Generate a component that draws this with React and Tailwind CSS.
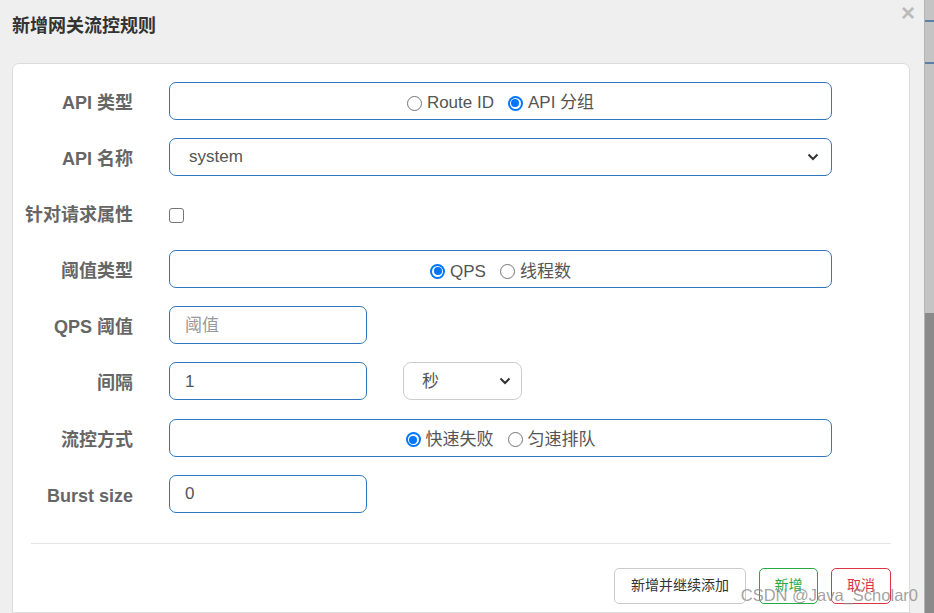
const FONT = { fontFamily: '"Liberation Sans", "Noto Sans CJK SC", sans-serif' };

const Radio = ({ checked, label }) => (
  <label className="flex items-center gap-[5px]">
    {checked ? (
      <span className="w-[15px] h-[15px] rounded-full bg-[#0075ff] flex items-center justify-center">
        <span className="w-[11px] h-[11px] rounded-full bg-white flex items-center justify-center">
          <span className="w-[8px] h-[8px] rounded-full bg-[#0075ff]" />
        </span>
      </span>
    ) : (
      <span className="w-[15px] h-[15px] rounded-full border border-[#767676] bg-white" />
    )}
    <span>{label}</span>
  </label>
);

const Chevron = () => (
  <svg width="12" height="8" viewBox="0 0 12 8" className="shrink-0">
    <path d="M1.5 1.5 L6 6 L10.5 1.5" fill="none" stroke="#333" strokeWidth="2" />
  </svg>
);

const Row = ({ label, children }) => (
  <div className="flex items-center h-[38px]">
    <div className="w-[120px] pt-[5px] text-right text-[18px] font-bold text-[#666] whitespace-nowrap">{label}</div>
    <div className="ml-[36px] flex items-center">{children}</div>
  </div>
);

const boxCls = 'h-[38px] border border-[#2f78c0] rounded-[7px] bg-white text-[17px] text-[#555]';

export default function App() {
  return (
    <div className="flex h-[613px] w-[934px] overflow-hidden bg-[#efefef]" style={FONT}>
      <div className="relative w-[924px] shrink-0 flex flex-col">
        {/* header */}
        <div className="h-[63px] flex items-start pt-[14px] pl-[12px]">
          <h4 className="text-[18px] font-bold text-[#333] leading-[24px]">新增网关流控规则</h4>
        </div>
        <button className="absolute right-[9px] top-[1px] text-[24px] leading-[24px] font-bold text-[#bbb]">×</button>

        {/* body */}
        <div className="ml-[12px] w-[898px] flex-1 bg-white border border-[#dcdcdc] rounded-t-[7px] pt-[18px]">
          <div className="flex flex-col gap-[18.1px]">
            <Row label="API 类型">
              <div className={`${boxCls} w-[663px] flex items-center justify-center gap-[14px] pt-[4px]`}>
                <Radio label="Route ID" />
                <Radio checked label="API 分组" />
              </div>
            </Row>
            <Row label="API 名称">
              <div className={`${boxCls} w-[663px] flex items-center justify-between pl-[19px] pr-[12px]`}>
                <span>system</span>
                <Chevron />
              </div>
            </Row>
            <Row label="针对请求属性">
              <span className="mt-[4px] w-[15px] h-[15px] rounded-[3px] border border-[#767676] bg-white" />
            </Row>
            <Row label="阈值类型">
              <div className={`${boxCls} w-[663px] flex items-center justify-center gap-[14px] pt-[4px]`}>
                <Radio checked label="QPS" />
                <Radio label="线程数" />
              </div>
            </Row>
            <Row label="QPS 阈值">
              <div className={`${boxCls} w-[198px] flex items-center pl-[15px] text-[#999]`}>阈值</div>
            </Row>
            <Row label="间隔">
              <div className={`${boxCls} w-[198px] flex items-center pl-[15px]`}>1</div>
              <div className="ml-[36px] h-[38px] w-[119px] border border-[#ccc] rounded-[8px] flex items-center justify-between pl-[18px] pr-[10px] text-[17px] text-[#555]">
                <span>秒</span>
                <Chevron />
              </div>
            </Row>
            <Row label="流控方式">
              <div className={`${boxCls} w-[663px] flex items-center justify-center gap-[14px] pt-[4px]`}>
                <Radio checked label="快速失败" />
                <Radio label="匀速排队" />
              </div>
            </Row>
            <Row label="Burst size">
              <div className={`${boxCls} w-[198px] flex items-center pl-[15px]`}>0</div>
            </Row>
          </div>

          <div className="mx-[18px] mt-[30px] border-t border-[#e5e5e5]" />

          <div className="flex justify-end gap-[13px] mr-[18px] mt-[24px]">
            <button className="h-[36px] w-[132px] border border-[#ccc] rounded-[5px] text-[14px] text-[#333] bg-white">新增并继续添加</button>
            <button className="h-[36px] w-[59px] border border-[#28a745] rounded-[5px] text-[14px] text-[#28a745] bg-white">新增</button>
            <button className="h-[36px] w-[60px] border border-[#dc3545] rounded-[5px] text-[14px] text-[#dc3545] bg-white">取消</button>
          </div>
        </div>

        {/* watermark */}
        <div className="absolute right-[6px] bottom-[9px] text-[16.5px] leading-[18px] text-[#8a8a8a]/80 pointer-events-none">
          CSDN @Java_Scholar0
        </div>
      </div>

      {/* page behind the modal */}
      <div className="w-[10px] shrink-0 flex flex-col bg-[#c4c4c4] border-l border-[#b5b5b5]">
        <div className="mt-[20px] h-[2px] bg-[#5b7fa8]" />
        <div className="mt-[40px] h-[2px] bg-[#5b7fa8]" />
        <div className="flex-1" />
        <div className="h-[300px] bg-[#8a8a8a]" />
      </div>
    </div>
  );
}
